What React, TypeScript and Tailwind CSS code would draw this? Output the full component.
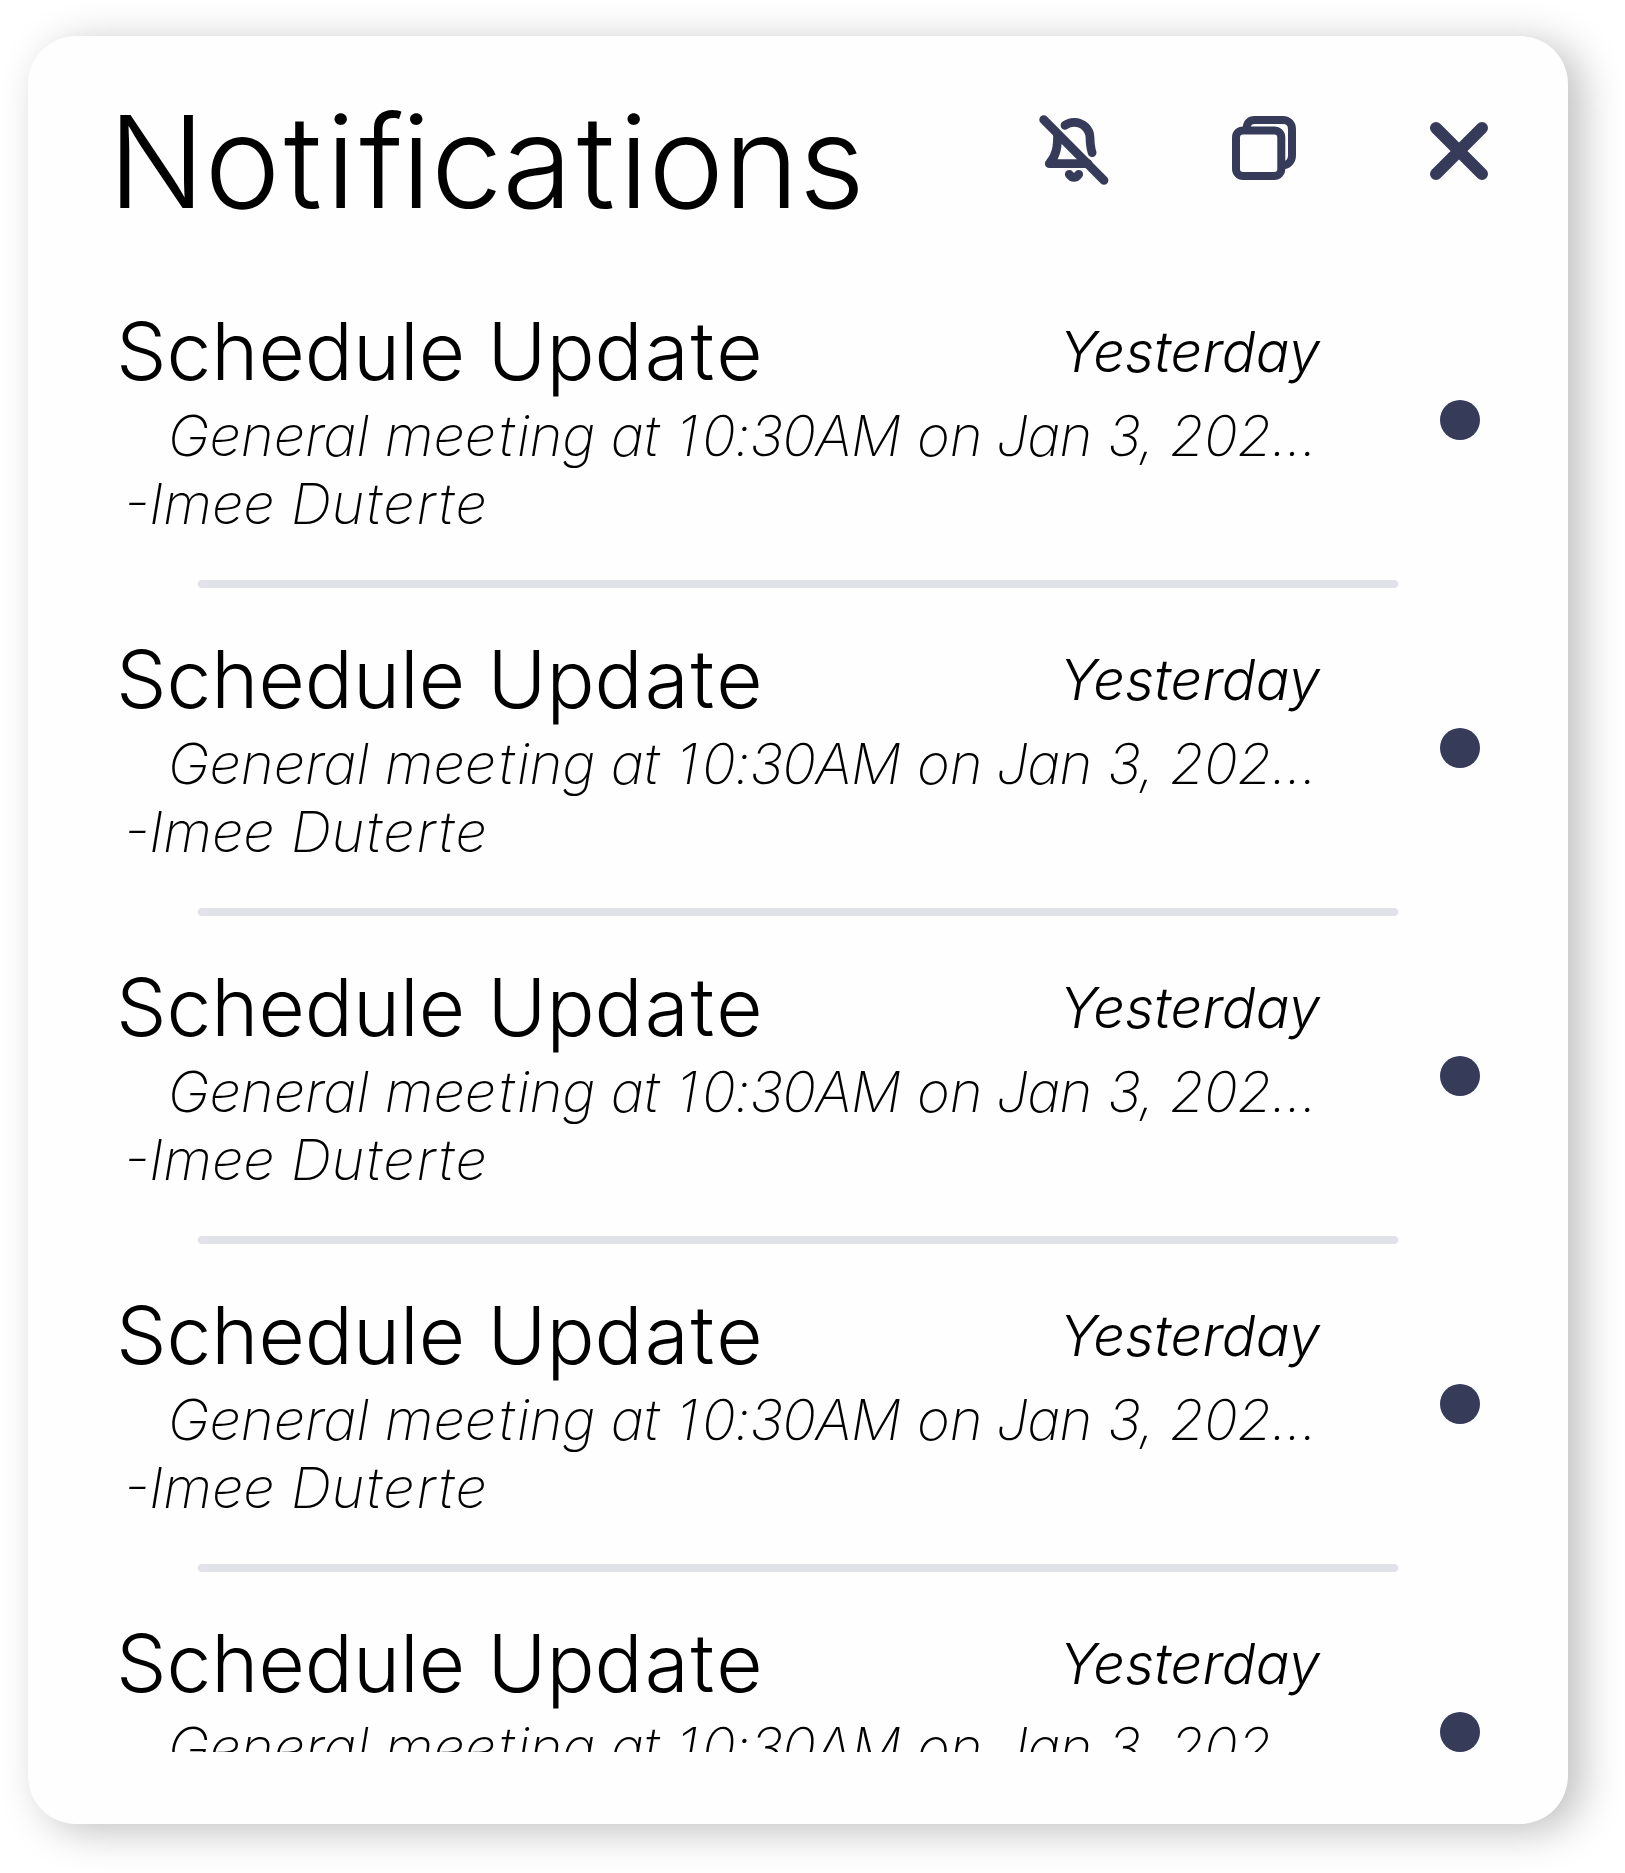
const INK = '#363B59';

function BellOffIcon() {
  return (
    <svg width="76" height="76" viewBox="0 0 76 76" fill="none" stroke={INK} strokeWidth="8.8" strokeLinecap="round" strokeLinejoin="round">
      <path d="M7.7 6.7L68 67.3" />
      <path d="M29 12.3C31.7 10.3 34.7 9.3 38 9.3C47 9.3 53.8 16 54 24.5C54.1 30.5 54.6 35 56.1 39.7" />
      <path d="M21.6 21.5C21.6 33 20.8 42 13.3 50.7H52" />
      <path d="M33.3 61.3Q38 67.5 42.7 61.3" />
    </svg>
  );
}

function CopyIcon() {
  return (
    <svg width="72" height="72" viewBox="0 0 72 72" fill="none" stroke={INK} strokeWidth="8">
      <rect x="8" y="18.4" width="45.3" height="45.6" rx="7" />
      <path d="M18.7 16C18.7 11 22 8 26.5 8H55C60.3 8 64 12 64 17V43.5C64 49 60 53 54.5 53.4" />
    </svg>
  );
}

function CloseIcon() {
  return (
    <svg width="64" height="64" viewBox="0 0 64 64" fill="none" stroke={INK} strokeWidth="12" strokeLinecap="round">
      <path d="M9 9L55 55M55 9L9 55" />
    </svg>
  );
}

// A run of characters and the tracking, in pixels, that follows each of them.
type Run = [text: string, tracking: number];

function Tracked({ runs }: { runs: Run[] }) {
  return (
    <>
      {runs.map(([text, tracking], i) => (
        <span key={i} style={{ letterSpacing: tracking }}>{text}</span>
      ))}
    </>
  );
}

const heading: Run[] = [['N', -0.8], ['oti', 3.6], ['f', -2], ['ic', -0.2], ['at', 4], ['ions', -0.4]];
const title: Run[] = [['Schedule Up', 0], ['dat', 1.9], ['e', 0]];
const time: Run[] = [['Yesterday', 0.15]];
const message: Run[] = [
  ['General me', 0],
  ['et', 2.8],
  ['ing at', -0.1],
  [' ', 1.9],
  ['1', 4],
  ['0:30', -0.9],
  ['AM', -1],
  [' ', 0.9],
  ['on', 0],
  [' ', -1.8],
  ['Jan', -0.9],
  [' ', 0],
  ['3, 202...', -0.4],
];
const author: Run[] = [['-Imee', 0], [' ', 0.6], ['D', 0.4], ['uterte', 2.05]];

const notifications = Array.from({ length: 5 }, () => ({ title, time, message, author }));

export default function App() {
  return (
    <main className="h-[1873px] w-[1625px] overflow-hidden bg-white pt-[36px] pl-[28px] text-black [font-family:Inter,sans-serif]">
      <section className="h-[1788px] w-[1540px] rounded-[48px] bg-[#fefefe] shadow-[14px_7px_40px_rgba(0,0,0,0.25)]">
        <header className="flex h-[267px] items-start pt-[48px] pl-[80px]">
          <h1 className="w-[928px] text-[128px] leading-[155px] font-light whitespace-nowrap">
            <Tracked runs={heading} />
          </h1>
          <div className="flex pt-[29px]">
            <button aria-label="Mute notifications" className="h-[76px] w-[76px]">
              <BellOffIcon />
            </button>
            <button aria-label="Open in window" className="mt-[-1px] ml-[116px] h-[72px] w-[72px]">
              <CopyIcon />
            </button>
            <button aria-label="Close" className="mt-[6px] ml-[127px] h-[64px] w-[64px]">
              <CloseIcon />
            </button>
          </div>
        </header>
        <ul className="h-[1449px] overflow-hidden">
          {notifications.map((n, i) => (
            <li key={i} className="h-[328px]">
              <div className="flex h-[277px]">
                <div className="w-[1412px] whitespace-nowrap">
                  <div className="flex h-[99px]">
                    <h2 className="w-[1032px] pl-[88px] text-[80px] leading-[96px] font-light">
                      <Tracked runs={n.title} />
                    </h2>
                    <time className="pt-[15px] text-[56px] leading-[68px] font-light italic">
                      <Tracked runs={n.time} />
                    </time>
                  </div>
                  <p className="pl-[140px] text-[56px] leading-[68px] font-extralight italic">
                    <Tracked runs={n.message} />
                  </p>
                  <p className="pl-[96px] text-[56px] leading-[68px] font-extralight italic">
                    <Tracked runs={n.author} />
                  </p>
                </div>
                <span className="mt-[97px] h-[40px] w-[40px] rounded-full bg-[#363B59]" />
              </div>
              <div className="ml-[170px] h-[8px] w-[1200px] rounded-full bg-[#E1E2E7]" />
            </li>
          ))}
        </ul>
      </section>
    </main>
  );
}
